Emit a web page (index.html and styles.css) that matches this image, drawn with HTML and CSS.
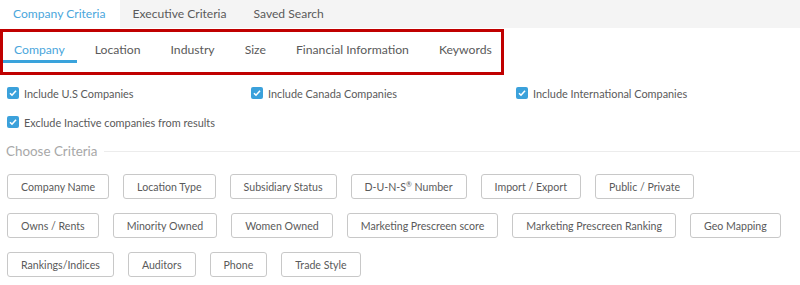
FILE: index.html
```html
<!DOCTYPE html>
<html>
	<head>
		<title>Company Criteria</title>
		<link rel="stylesheet" href="styles.css">
	</head>
	<body>
		<div class="main-tabs">
			<a class="main-tab active">Company Criteria</a>
			<a class="main-tab">Executive Criteria</a>
			<a class="main-tab">Saved Search</a>
		</div>

		<div class="sub-wrap">
			<div class="sub-tabs">
				<a class="sub-tab active">Company</a>
				<a class="sub-tab">Location</a>
				<a class="sub-tab">Industry</a>
				<a class="sub-tab">Size</a>
				<a class="sub-tab">Financial Information</a>
				<a class="sub-tab">Keywords</a>
			</div>
			<div class="highlight"></div>
		</div>

		<div class="checks">
			<label class="check"><span class="box"><svg viewBox="0 0 12 12" width="12" height="12"><path d="M3 6.2 L5 8.2 L9 3.8" fill="none" stroke="#fff" stroke-width="1.6"/></svg></span>Include U.S Companies</label>
			<label class="check"><span class="box"><svg viewBox="0 0 12 12" width="12" height="12"><path d="M3 6.2 L5 8.2 L9 3.8" fill="none" stroke="#fff" stroke-width="1.6"/></svg></span>Include Canada Companies</label>
			<label class="check"><span class="box"><svg viewBox="0 0 12 12" width="12" height="12"><path d="M3 6.2 L5 8.2 L9 3.8" fill="none" stroke="#fff" stroke-width="1.6"/></svg></span>Include International Companies</label>
			<label class="check"><span class="box"><svg viewBox="0 0 12 12" width="12" height="12"><path d="M3 6.2 L5 8.2 L9 3.8" fill="none" stroke="#fff" stroke-width="1.6"/></svg></span>Exclude Inactive companies from results</label>
		</div>

		<div class="legend">
			<span>Choose Criteria</span>
			<div class="rule"></div>
		</div>

		<div class="criteria">
			<div class="crit-row">
				<button class="crit">Company Name</button>
				<button class="crit">Location Type</button>
				<button class="crit">Subsidiary Status</button>
				<button class="crit">D-U-N-S<sup>®</sup> Number</button>
				<button class="crit">Import / Export</button>
				<button class="crit">Public / Private</button>
			</div>
			<div class="crit-row">
				<button class="crit">Owns / Rents</button>
				<button class="crit">Minority Owned</button>
				<button class="crit">Women Owned</button>
				<button class="crit">Marketing Prescreen score</button>
				<button class="crit">Marketing Prescreen Ranking</button>
				<button class="crit">Geo Mapping</button>
			</div>
			<div class="crit-row">
				<button class="crit">Rankings/Indices</button>
				<button class="crit">Auditors</button>
				<button class="crit">Phone</button>
				<button class="crit">Trade Style</button>
			</div>
		</div>
	</body>
</html>
```

FILE: styles.css
```css
body {
	margin: 0;
	font-family: Lato, "Open Sans", Arial, sans-serif;
	color: #5a5a5a;
	background: #ffffff;
}

.main-tabs {
	display: flex;
	height: 28px;
	background: #f4f4f4;
}

.main-tab {
	padding: 0 14px 0 13px;
	line-height: 28px;
	font-size: 12.1px;
	color: #5a5a5a;
}

.main-tab.active {
	background: #ffffff;
	color: #4aa6dc;
}

.sub-wrap {
	position: relative;
}

.sub-tabs {
	display: flex;
	height: 45px;
}

.sub-tab {
	padding: 0 12px 0 14px;
	margin-right: 4px;
	line-height: 43px;
	height: 32px;
	font-size: 12.2px;
	color: #5a5a5a;
}

.sub-tab.active {
	color: #4aa6dc;
	border-bottom: 3px solid #3aa3dc;
}

.highlight {
	position: absolute;
	left: 0;
	top: 1px;
	width: 498px;
	height: 40px;
	border: 3px solid #c00000;
	pointer-events: none;
}

.checks {
	display: grid;
	grid-template-columns: 244px 265px 1fr;
	row-gap: 15px;
	padding: 13px 0 0 7px;
}

.check {
	display: flex;
	align-items: center;
	font-size: 10.9px;
	color: #5a5a5a;
	height: 14px;
}

.box {
	display: inline-block;
	width: 12px;
	height: 12px;
	border-radius: 2px;
	background: #3ba1db;
	margin-right: 5px;
}

.box svg {
	display: block;
}

.legend {
	display: flex;
	align-items: center;
	padding: 14px 0 0 6px;
	height: 16px;
}

.legend span {
	font-size: 13.4px;
	color: #a8a8a8;
	margin-right: 7px;
}

.rule {
	flex: 1;
	border-top: 1px solid #ececec;
}

.criteria {
	display: flex;
	flex-direction: column;
	gap: 14px;
	padding: 15px 0 0 7px;
}

.crit-row {
	display: flex;
	gap: 14px;
}

.crit {
	height: 25px;
	padding: 0 13px;
	border: 1px solid #c8c8c8;
	border-radius: 3px;
	background: #ffffff;
	font-family: Lato, "Open Sans", Arial, sans-serif;
	font-size: 10.6px;
	color: #5a5a5a;
}

.crit sup {
	font-size: 7px;
	vertical-align: 4px;
	line-height: 0;
}
```
